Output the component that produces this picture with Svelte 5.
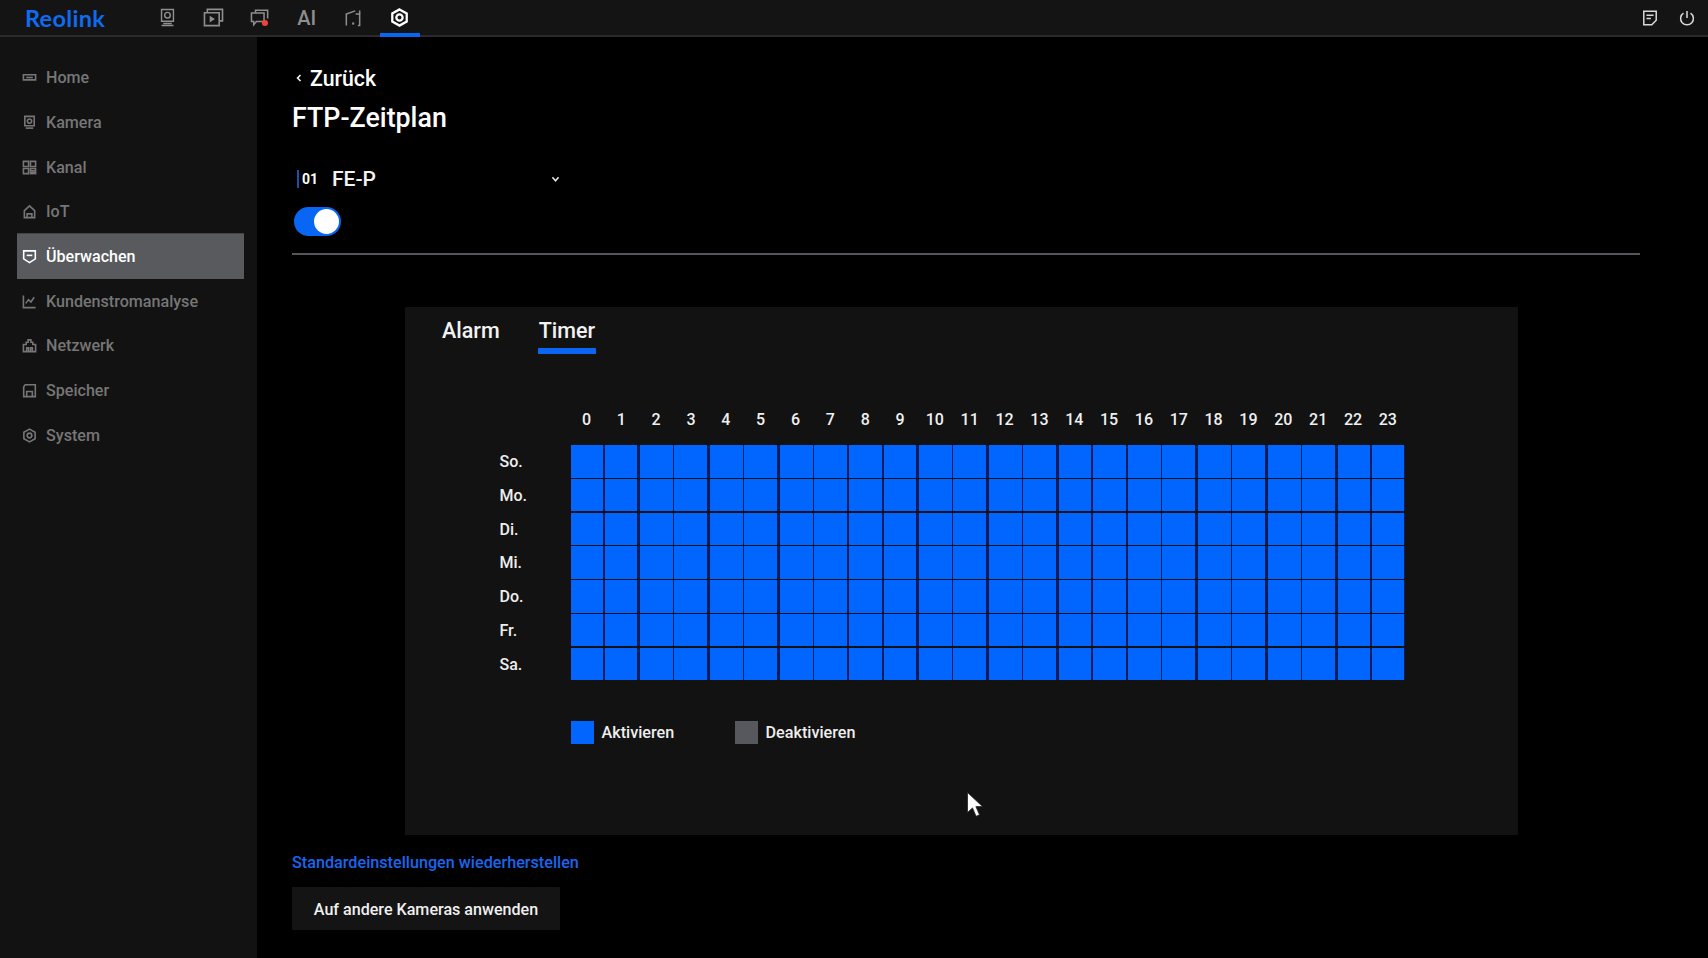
<script lang="ts">
    let tab = $state('Timer');
    let enabled = $state(true);

    const hours = Array.from({ length: 24 }, (_, i) => i);
    const days = ['So.', 'Mo.', 'Di.', 'Mi.', 'Do.', 'Fr.', 'Sa.'];

    const icons: Record<string, string[]> = {
        home: ['M1.5 5h13v5.5h-13z', 'M4.5 8h7'],
        camera: ['M3 1.5h10v10H3z', 'M8 4.2a2.3 2.3 0 1 0 0 4.6a2.3 2.3 0 1 0 0-4.6z', 'M4 14h8'],
        channel: ['M1.5 1.5h5.5v5.5H1.5z', 'M9 1.5h5.5v5.5H9z', 'M1.5 9h5.5v5.5H1.5z', 'M9 9h5.5v2.4H9z', 'M9 13h5.5v1.5H9z'],
        iot: ['M2.5 7l5.5-5l5.5 5v7.5h-11z', 'M5.5 14.5v-4h5v4'],
        monitor: ['M1.8 2h12.4v8.5L8 14.5l-6.2-4z', 'M5 6.8h6'],
        chart: ['M1.5 1.5v13h13', 'M4 10l3-4l2.5 2.5L13 3.5'],
        network: ['M1.5 7h3V4.5h2V2h3v2.5h2V7h3v7.5h-13z', 'M5 14.5v-4h2v4', 'M9 14.5v-4h2v4'],
        storage: ['M3.5 1.8h10.7v12.7H1.8V4z', 'M5 14.5V9h6v5.5'],
        system: ['M8 1.2l6 3.4v6.8l-6 3.4l-6-3.4V4.6z', 'M8 5.5a2.5 2.5 0 1 0 0 5a2.5 2.5 0 1 0 0-5z']
    };

    const menu = [
        { label: 'Home', icon: 'home' },
        { label: 'Kamera', icon: 'camera' },
        { label: 'Kanal', icon: 'channel' },
        { label: 'IoT', icon: 'iot' },
        { label: 'Überwachen', icon: 'monitor', active: true },
        { label: 'Kundenstromanalyse', icon: 'chart' },
        { label: 'Netzwerk', icon: 'network' },
        { label: 'Speicher', icon: 'storage' },
        { label: 'System', icon: 'system' }
    ];
</script>

<div class="page">
    <header class="topbar">
        <span class="logo">Reolink</span>
        <nav class="topnav">
            <span class="navitem">
                <svg viewBox="0 0 20 22" width="17" height="19"><path d="M3 1.5h14v14H3z" /><path d="M10 5a3.3 3.3 0 1 0 0 6.6a3.3 3.3 0 1 0 0-6.6z" /><path d="M5 18h10M3 20.5h14" /></svg>
            </span>
            <span class="navitem">
                <svg viewBox="0 0 22 20" width="21" height="19"><path d="M4.5 5V1.5h16v12H17" /><path d="M1.5 5h15.5v13.5H1.5z" /><path class="solid" d="M7 8.2l5.5 3.5L7 15.2z" /></svg>
            </span>
            <span class="navitem">
                <svg viewBox="0 0 22 20" width="20" height="18"><path d="M6 4V1.5h13.5v9" /><path d="M1.5 4.5h14V14H7l-3 3.5V14H1.5z" /><circle class="dot" cx="16.5" cy="15.5" r="3.4" /></svg>
            </span>
            <span class="navitem ai">AI</span>
            <span class="navitem">
                <svg viewBox="0 0 18 20" width="16" height="18"><path d="M1.5 18.5v-13l10-3.5" /><path d="M12 5.5h4.5v13h-2" /><path d="M16.5 1.5v4" /><path class="solid" d="M8 15h2.4v2.4H8z" /></svg>
            </span>
            <span class="navitem current">
                <svg viewBox="0 0 20 20" width="19" height="19"><path d="M10 1.5l7.6 4.2v8.6L10 18.5l-7.6-4.2V5.7z" /><path d="M10 6.7a3.3 3.3 0 1 0 0 6.6a3.3 3.3 0 1 0 0-6.6z" /></svg>
            </span>
        </nav>
        <div class="topright">
            <svg viewBox="0 0 18 18" width="16" height="16"><path d="M2 1.5h14v10l-5 5H2z" /><path d="M5 6h8M5 9.5h5" /></svg>
            <svg viewBox="0 0 18 18" width="16" height="16"><path d="M5 3.5a7.2 7.2 0 1 0 8 0" /><path d="M9 1v8" /></svg>
        </div>
    </header>

    <div class="body">
        <aside class="sidebar">
            {#each menu as item}
                <div class="menuitem" class:active={item.active}>
                    <svg viewBox="0 0 16 16" width="15" height="15">
                        {#each icons[item.icon] as d}<path {d} />{/each}
                    </svg>
                    <span>{item.label}</span>
                </div>
            {/each}
        </aside>

        <main class="main">
            <div class="back">
                <svg viewBox="0 0 8 10" width="6" height="8"><path d="M6 1L2 5l4 4" /></svg>
                <span>Zurück</span>
            </div>
            <h1>FTP-Zeitplan</h1>

            <div class="channel">
                <span class="chan-no">01</span>
                <span class="chan-name">FE-P</span>
                <svg viewBox="0 0 10 8" width="9" height="7"><path d="M1.5 1.5L5 5.5l3.5-4" /></svg>
            </div>

            <button class="toggle" class:on={enabled} aria-label="FTP" onclick={() => (enabled = !enabled)}><span></span></button>

            <div class="divider"></div>

            <section class="panel">
                <div class="tabs">
                    {#each ['Alarm', 'Timer'] as t}
                        <button class="tab" class:selected={tab === t} onclick={() => (tab = t)}>{t}</button>
                    {/each}
                </div>

                <div class="schedule">
                    <div class="hours">
                        {#each hours as h}<span>{h}</span>{/each}
                    </div>
                    <div class="rows">
                        {#each days as day}
                            <div class="row">
                                <span class="day">{day}</span>
                                <div class="cells">
                                    {#each hours as h}<span class="cell"></span>{/each}
                                </div>
                            </div>
                        {/each}
                    </div>
                </div>

                <div class="legend">
                    <span class="swatch blue"></span>
                    <span class="legend-label">Aktivieren</span>
                    <span class="swatch grey"></span>
                    <span class="legend-label">Deaktivieren</span>
                </div>

                <svg class="pointer" viewBox="0 0 16 25" width="16" height="25"><path d="M0.5 0.5v20l5-4.6l3.6 8.4l3.4-1.5l-3.6-8.2h6.6z" /></svg>
            </section>

            <a class="restore" href="#restore">Standardeinstellungen wiederherstellen</a>
            <button class="apply">Auf andere Kameras anwenden</button>
        </main>
    </div>
</div>

<style>
    :global(body) {
        margin: 0;
        background: #000;
    }

    .page {
        height: 958px;
        display: flex;
        flex-direction: column;
        overflow: hidden;
        font-family: Roboto, "Liberation Sans", sans-serif;
        font-weight: 500;
        color: #f2f2f2;
        background: #000;
    }

    svg {
        fill: none;
        stroke: currentColor;
        stroke-width: 1.7;
        display: block;
    }

    svg .solid {
        fill: currentColor;
        stroke: none;
    }

    .topbar {
        height: 37px;
        flex: none;
        box-sizing: border-box;
        display: flex;
        align-items: center;
        background: #141414;
        border-bottom: 2px solid #2a2a2a;
        padding-left: 25px;
        padding-right: 13px;
    }

    .logo {
        width: 119px;
        font-family: Lato, Roboto, sans-serif;
        font-size: 23.5px;
        font-weight: 700;
        letter-spacing: 0.3px;
        color: #0f6bf0;
    }

    .topnav {
        display: flex;
        height: 100%;
    }

    .navitem {
        width: 46.5px;
        height: 35px;
        position: relative;
        display: flex;
        align-items: center;
        justify-content: center;
        color: #8e8e8e;
    }

    .ai {
        font-size: 20px;
    }

    .dot {
        fill: #f0433a;
        stroke: none;
    }

    .current {
        color: #fff;
    }

    .current::after {
        content: '';
        position: absolute;
        left: 3.5px;
        right: 3.5px;
        bottom: -2px;
        height: 4px;
        background: #0a66f0;
    }

    .current svg {
        stroke-width: 2.4;
    }

    .topright {
        margin-left: auto;
        display: flex;
        gap: 21px;
        color: #d8d8d8;
    }

    .body {
        flex: 1;
        display: flex;
        min-height: 0;
    }

    .sidebar {
        width: 257px;
        flex: none;
        box-sizing: border-box;
        background: #121212;
        padding: 18.5px 13px 0 17px;
    }

    .menuitem {
        height: 44.7px;
        box-sizing: border-box;
        display: flex;
        align-items: center;
        gap: 9px;
        padding-left: 5px;
        font-size: 16.1px;
        color: #767676;
    }

    .menuitem.active {
        background: #595a5e;
        color: #fff;
        box-shadow: 0 -0.7px 0 #595a5e;
    }

    .main {
        flex: 1;
        min-width: 0;
        padding: 29px 68px 0 35px;
    }

    .back {
        display: flex;
        align-items: center;
        gap: 8px;
        height: 24px;
        padding-left: 4px;
        font-size: 21.3px;
        color: #fff;
    }

    .back svg {
        stroke-width: 2;
    }

    h1 {
        margin: 11px 0 0;
        font-size: 26.8px;
        font-weight: 500;
        line-height: 34px;
        color: #fff;
    }

    .channel {
        width: 263px;
        height: 24px;
        margin-top: 32px;
        padding-left: 5px;
        display: flex;
        align-items: center;
    }

    .chan-no {
        width: 35px;
        height: 18px;
        box-sizing: border-box;
        border-left: 2px solid #1f4fa8;
        padding-left: 3px;
        font-size: 14px;
        font-weight: 700;
        line-height: 18px;
        color: #fff;
    }

    .chan-name {
        font-size: 21px;
        flex: 1;
    }

    .channel svg {
        stroke-width: 1.8;
        color: #e6e6e6;
    }

    button {
        font-family: inherit;
        font-weight: 500;
        border: none;
        padding: 0;
        cursor: pointer;
    }

    .toggle {
        display: block;
        margin: 16px 0 0 2px;
        width: 47px;
        height: 29px;
        border-radius: 15px;
        background: #505050;
        position: relative;
    }

    .toggle.on {
        background: #0866f5;
    }

    .toggle span {
        position: absolute;
        top: 2px;
        left: 2px;
        width: 25px;
        height: 25px;
        border-radius: 50%;
        background: #fff;
    }

    .toggle.on span {
        left: 20px;
    }

    .divider {
        margin-top: 17px;
        height: 2px;
        background: #55565c;
    }

    .panel {
        position: relative;
        margin: 52px 0 0 113px;
        width: 1113px;
        height: 528px;
        box-sizing: border-box;
        background: #121212;
        padding: 9px 0 0 36px;
    }

    .tabs {
        display: flex;
        gap: 37px;
    }

    .tab {
        background: none;
        color: #f2f2f2;
        font-size: 21.5px;
        line-height: 30px;
        padding: 0 1px 2px;
        border-bottom: 6px solid transparent;
    }

    .tab.selected {
        border-bottom-color: #0a66f0;
    }

    .schedule {
        margin: 56px 0 0 129.5px;
    }

    .hours {
        display: flex;
        height: 20px;
        margin-left: -1.5px;
        font-size: 16px;
        line-height: 20px;
        color: #f0f0f0;
    }

    .hours span {
        width: 34.85px;
        text-align: center;
        flex: none;
    }

    .rows {
        margin-top: 15px;
        display: flex;
        flex-direction: column;
        gap: 1.3px;
    }

    .row {
        position: relative;
        height: 32.5px;
    }

    .day {
        position: absolute;
        top: 1px;
        right: 100%;
        margin-right: 36px;
        width: 35px;
        font-size: 16px;
        line-height: 32.5px;
        color: #eee;
    }

    .cells {
        display: flex;
        width: 834.2px;
        height: 100%;
        background: #0b1c58;
    }

    .cell {
        flex: none;
        width: 32.8px;
        height: 100%;
        margin-right: 1.3px;
        background: #0066ff;
    }

    .cell:nth-child(even) {
        margin-right: 2.85px;
    }

    .cell:last-child {
        margin-right: 0;
    }

    .legend {
        margin: 41px 0 0 129.5px;
        display: flex;
        align-items: center;
        font-size: 16.2px;
        color: #eee;
    }

    .swatch {
        width: 23px;
        height: 23px;
    }

    .blue {
        background: #0066ff;
    }

    .grey {
        background: #56585e;
    }

    .legend-label {
        margin-left: 8px;
    }

    .legend-label:nth-child(2) {
        width: 133px;
    }

    .pointer {
        position: absolute;
        left: 562px;
        top: 485px;
        fill: #fff;
        stroke: #222;
        stroke-width: 0.8;
    }

    .restore {
        display: block;
        width: fit-content;
        margin-top: 18px;
        font-size: 16.2px;
        line-height: 20px;
        color: #1a66ee;
        text-decoration: none;
    }

    .apply {
        display: block;
        margin-top: 14px;
        width: 268px;
        height: 43px;
        padding-top: 1px;
        background: #141414;
        color: #f0f0f0;
        font-size: 16.1px;
    }
</style>
